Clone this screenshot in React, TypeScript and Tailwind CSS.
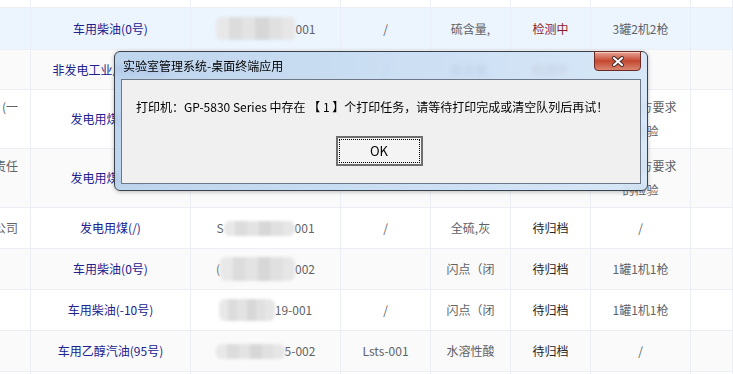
import React from "react";

// --- COLUMN WIDTHS (table is scrolled, first column is only partly visible) ---
const widths = [
  "w-[31px]",
  "w-[160px]",
  "w-[150px]",
  "w-[90px]",
  "w-[80px]",
  "w-[80px]",
  "w-[100px]",
  "flex-1",
];

const shades = ["bg-[#e8e8e8]", "bg-[#dcdcdc]", "bg-[#e3e3e3]", "bg-[#d7d7d7]", "bg-[#e0e0e0]", "bg-[#e6e6e6]"];

// blurred sample number (masked in the screenshot)
const Sample = ({ pre, w, h, tail }: { pre?: string; w: string; h: string; tail: string }) => (
  <span className="flex items-center">
    {pre && <span>{pre}</span>}
    <span className={`flex ${w} ${h} blur-[1.5px] rounded-[6px] overflow-hidden`}>
      {shades.map((s, i) => (
        <span key={i} className={`flex-1 ${s}`} />
      ))}
    </span>
    <span>{tail}</span>
  </span>
);

const Prod = ({ children }: { children: React.ReactNode }) => (
  <span className="text-[#20208f] whitespace-nowrap">{children}</span>
);

const Row = ({ h, bg, cells }: { h: string; bg: string; cells: React.ReactNode[] }) => (
  <div className={`flex shrink-0 border-b border-[#ebeef5] ${h} ${bg}`}>
    {cells.map((c, i) => (
      <div
        key={i}
        className={`${widths[i]} shrink-0 border-r border-[#ebeef5] flex items-center overflow-hidden leading-6 text-center ${
          i === 0 ? "justify-end pr-[12px] whitespace-nowrap" : "justify-center"
        }`}
      >
        {c}
      </div>
    ))}
  </div>
);

const Pending = () => <span className="text-[#262626]">待归档</span>;
const Testing = () => <span className="text-[#8a1f2b]">检测中</span>;

export default function App() {
  return (
    <div className="relative w-[733px] h-[374px] overflow-hidden bg-white font-['Noto_Sans_CJK_SC',sans-serif] text-[12px] text-[#606266]">
      {/* --- TABLE --- */}
      <div className="flex flex-col">
        <Row h="h-[8px]" bg="bg-white" cells={["", "", "", "", "", "", "", ""]} />
        <Row
          h="h-[42px]"
          bg="bg-[#ecf4fe]"
          cells={[
            "",
            <Prod>车用柴油(0号)</Prod>,
            <Sample w="w-[80px]" h="h-[23px]" tail="001" />,
            "/",
            "硫含量,",
            <Testing />,
            "3罐2机2枪",
            "",
          ]}
        />
        <Row
          h="h-[40px]"
          bg="bg-[#fafafa]"
          cells={["", <Prod>非发电工业用煤(烟煤)</Prod>, "", "/", "硫含量,", <Testing />, "", ""]}
        />
        <Row
          h="h-[59px]"
          bg="bg-white"
          cells={[
            <div className="flex flex-col items-end">
              <span>(一</span>
              <span>&nbsp;</span>
            </div>,
            <Prod>发电用煤(烟煤)</Prod>,
            "",
            "/",
            "全硫,灰",
            <Pending />,
            <div>
              按委托方要求
              <br />
              的检验
            </div>,
            "",
          ]}
        />
        <Row
          h="h-[59px]"
          bg="bg-[#fafafa]"
          cells={[
            <div className="flex flex-col items-end">
              <span>负责任</span>
              <span>&nbsp;</span>
            </div>,
            <Prod>发电用煤(烟煤)</Prod>,
            "",
            "/",
            "全硫,灰",
            <Pending />,
            <div>
              按委托方要求
              <br />
              的检验
            </div>,
            "",
          ]}
        />
        <Row
          h="h-[41px]"
          bg="bg-white"
          cells={[
            "公司",
            <Prod>发电用煤(/)</Prod>,
            <Sample pre="S" w="w-[71px]" h="h-[15px]" tail="001" />,
            "/",
            "全硫,灰",
            <Pending />,
            "/",
            "",
          ]}
        />
        <Row
          h="h-[41px]"
          bg="bg-[#fafafa]"
          cells={[
            "",
            <Prod>车用柴油(0号)</Prod>,
            <Sample pre="(" w="w-[75px]" h="h-[24px]" tail="002" />,
            "",
            "闪点（闭",
            <Pending />,
            "1罐1机1枪",
            "",
          ]}
        />
        <Row
          h="h-[41px]"
          bg="bg-white"
          cells={[
            "",
            <Prod>车用柴油(-10号)</Prod>,
            <Sample w="w-[56px]" h="h-[22px]" tail="19-001" />,
            "/",
            "闪点（闭",
            <Pending />,
            "1罐1机1枪",
            "",
          ]}
        />
        <Row
          h="h-[41px]"
          bg="bg-[#fafafa]"
          cells={[
            "",
            <Prod>车用乙醇汽油(95号)</Prod>,
            <Sample w="w-[69px]" h="h-[15px]" tail="5-002" />,
            "Lsts-001",
            "水溶性酸",
            <Pending />,
            "/",
            "",
          ]}
        />
        <Row h="h-[41px]" bg="bg-white" cells={["", "", "", "", "", "", "", ""]} />
      </div>

      {/* --- MESSAGE BOX --- */}
      <div className="absolute left-[114px] top-[51px] w-[534px] h-[140px] flex flex-col rounded-[6px] border border-[#38424d] bg-linear-to-r from-[#b8d1ec]/90 to-[#d3e5f7]/90 backdrop-blur-[2px] px-[6px] pb-[6px] shadow-[0_1px_4px_rgba(0,0,0,0.25)]">
        <div className="h-[27px] shrink-0 flex items-center pl-[2px] text-[12px] text-black">
          实验室管理系统-桌面终端应用
        </div>

        <div className="absolute right-[6px] top-[-1px] w-[47px] h-[20px] flex items-center justify-center rounded-b-[4px] border border-[#6b2a22] bg-linear-to-b from-[#e6a296] via-[#c4462f] to-[#d98570] shadow-[inset_0_1px_0_rgba(255,255,255,0.5)]">
          <svg width="16" height="11" viewBox="0 0 16 11">
            <path d="M4 2 L12 9 M12 2 L4 9" stroke="#4a3030" strokeWidth="4" strokeLinecap="round" />
            <path d="M4 2 L12 9 M12 2 L4 9" stroke="#ffffff" strokeWidth="2" strokeLinecap="round" />
          </svg>
        </div>

        <div className="flex-1 flex flex-col border border-[#6c7887] bg-[#f0f0f0]">
          <div className="mt-[17px] pl-[14px] leading-5 text-[12px] text-black whitespace-nowrap">
            打印机：GP-5830 Series 中存在 【 1 】个打印任务，请等待打印完成或清空队列后再试！
          </div>
          <div className="mt-[19px] flex justify-center pr-[4px]">
            <div className="w-[87px] h-[30px] border-2 border-[#6e6e6e] bg-[#f4f4f4] p-[1px]">
              <div className="h-full w-full flex items-center justify-center border border-dotted border-black text-[13px] text-black">
                OK
              </div>
            </div>
          </div>
        </div>
      </div>
    </div>
  );
}
